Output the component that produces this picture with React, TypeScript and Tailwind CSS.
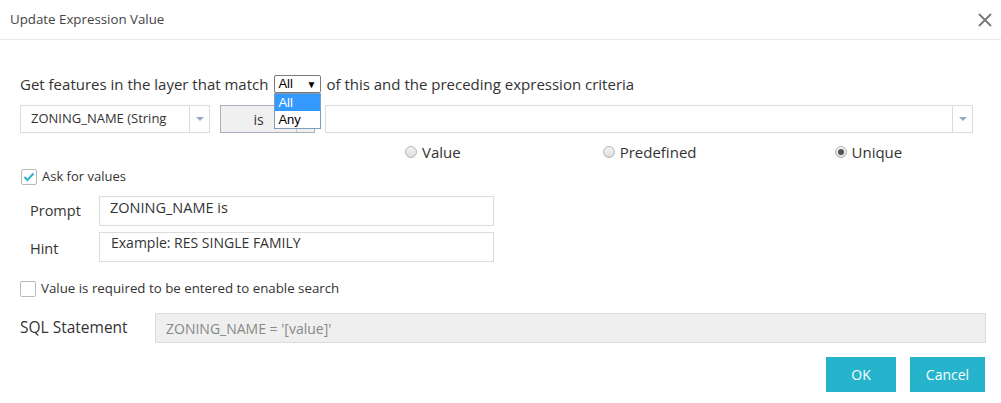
import React from "react"

function Radio({ label, checked }: { label: string; checked?: boolean }) {
  return (
    <div className="flex items-center gap-[5px]">
      <span className="w-[12px] h-[12px] rounded-full border border-[#b5b5b5] bg-gradient-to-b from-[#f4f4f4] to-[#dcdcdc] flex items-center justify-center">
        {checked && <span className="w-[6px] h-[6px] rounded-full bg-[#555]" />}
      </span>
      <span className="text-[15px] text-[#333]">{label}</span>
    </div>
  )
}

function Arrow() {
  return (
    <svg width="8" height="5" viewBox="0 0 8 5">
      <path d="M0 0 L8 0 L4 4 Z" fill="#9aa8bf" />
    </svg>
  )
}

export default function App() {
  return (
    <div className="w-[1001px] h-[403px] bg-white text-[#333] font-['Open_Sans','Lato',sans-serif] relative">
      <div className="h-[40px] border-b border-[#e3eaf0] flex items-center justify-between pl-[10px] pr-[8px]">
        <span className="text-[13.3px] text-[#444]">Update Expression Value</span>
        <svg width="16" height="16" viewBox="0 0 16 16">
          <path d="M2 2 L14 14 M14 2 L2 14" stroke="#777" strokeWidth="1.8" />
        </svg>
      </div>

      <div className="px-[20px] pt-[35px]">
        <div className="flex items-center h-[18px] text-[15px]">
          <span>Get features in the layer that match</span>
          <div className="relative ml-[6px]">
            <div className="w-[47px] h-[18px] border border-[#7a7a7a] rounded-[2px] flex items-center justify-between pl-[3px] pr-[4px] font-['Liberation_Sans',sans-serif] text-[13px] text-black">
              <span>All</span>
              <span className="text-[10px]">▼</span>
            </div>
            <div className="absolute left-0 top-[18px] w-[47px] border border-[#7f9db9] bg-white font-['Liberation_Sans',sans-serif] text-[13px] z-10">
              <div className="h-[17px] bg-[#3399ff] text-white pl-[3px] leading-[17px]">All</div>
              <div className="h-[17px] text-black pl-[3px] leading-[17px]">Any</div>
            </div>
          </div>
          <span className="ml-[5px]">of this and the preceding expression criteria</span>
        </div>

        <div className="flex items-center mt-[12px] h-[28px]">
          <div className="w-[190px] h-[28px] border border-[#dcdcdc] flex">
            <div className="flex-1 flex items-center pl-[10px] text-[13px] whitespace-nowrap overflow-hidden">ZONING_NAME (String</div>
            <div className="w-[20px] border-l border-[#dcdcdc] flex items-center justify-center">
              <Arrow />
            </div>
          </div>
          <div className="ml-[10px] w-[95px] h-[28px] border border-[#a9b0bd] bg-[#f0f0f0] flex">
            <div className="w-[75px] flex items-center justify-center text-[14px]">is</div>
            <div className="flex-1 border-l border-[#c6c6c6]" />
          </div>
          <div className="ml-[10px] flex-1 h-[28px] border border-[#dcdcdc] flex">
            <div className="flex-1" />
            <div className="w-[20px] border-l border-[#dcdcdc] flex items-center justify-center">
              <Arrow />
            </div>
          </div>
          <div className="w-[8px]" />
        </div>

        <div className="flex items-center h-[24px] mt-[7px]">
          <div className="w-[385px]" />
          <Radio label="Value" />
          <div className="w-[142px]" />
          <Radio label="Predefined" />
          <div className="w-[138px]" />
          <Radio label="Unique" checked />
        </div>

        <div className="flex items-center mt-[5px] h-[16px]">
          <span className="w-[16px] h-[16px] border border-[#b9b9b9] rounded-[2px] flex items-center justify-center ml-[1px]">
            <svg width="12" height="10" viewBox="0 0 12 10">
              <path d="M1.5 5 L4.5 8 L10.5 1.5" stroke="#2bb3cf" strokeWidth="2" fill="none" />
            </svg>
          </span>
          <span className="ml-[5px] text-[13px]">Ask for values</span>
        </div>

        <div className="flex mt-[11px] h-[30px]">
          <div className="w-[79px] pl-[10px] flex items-center text-[14.5px]">Prompt</div>
          <div className="w-[395px] border border-[#dcdcdc] pl-[10px] pt-[2px] text-[14.5px] leading-[18px]">ZONING_NAME is</div>
        </div>
        <div className="flex mt-[6px] h-[30px]">
          <div className="w-[79px] pl-[10px] flex items-center pt-[4px] text-[14.5px]">Hint</div>
          <div className="w-[395px] border border-[#dcdcdc] pl-[11px] pt-[1px] text-[14px] leading-[18px]">Example: RES SINGLE FAMILY</div>
        </div>

        <div className="flex items-center mt-[19px] h-[16px]">
          <span className="w-[16px] h-[16px] border border-[#b9b9b9] rounded-[2px]" />
          <span className="ml-[5px] text-[13.3px]">Value is required to be entered to enable search</span>
        </div>

        <div className="flex items-center mt-[16px] h-[30px] mr-[-5px]">
          <div className="w-[135px] text-[15.5px]">SQL Statement</div>
          <div className="flex-1 h-[30px] border border-[#dcdcdc] bg-[#efefef] flex items-center pl-[10px] text-[14px] text-[#888]">ZONING_NAME = &apos;[value]&apos;</div>
        </div>

        <div className="flex justify-end mt-[14px] mr-[-4px] gap-[14px]">
          <button className="w-[70px] h-[35px] bg-[#25b4cc] text-white text-[14px]">OK</button>
          <button className="w-[75px] h-[35px] bg-[#25b4cc] text-white text-[14px]">Cancel</button>
        </div>
      </div>
    </div>
  )
}
